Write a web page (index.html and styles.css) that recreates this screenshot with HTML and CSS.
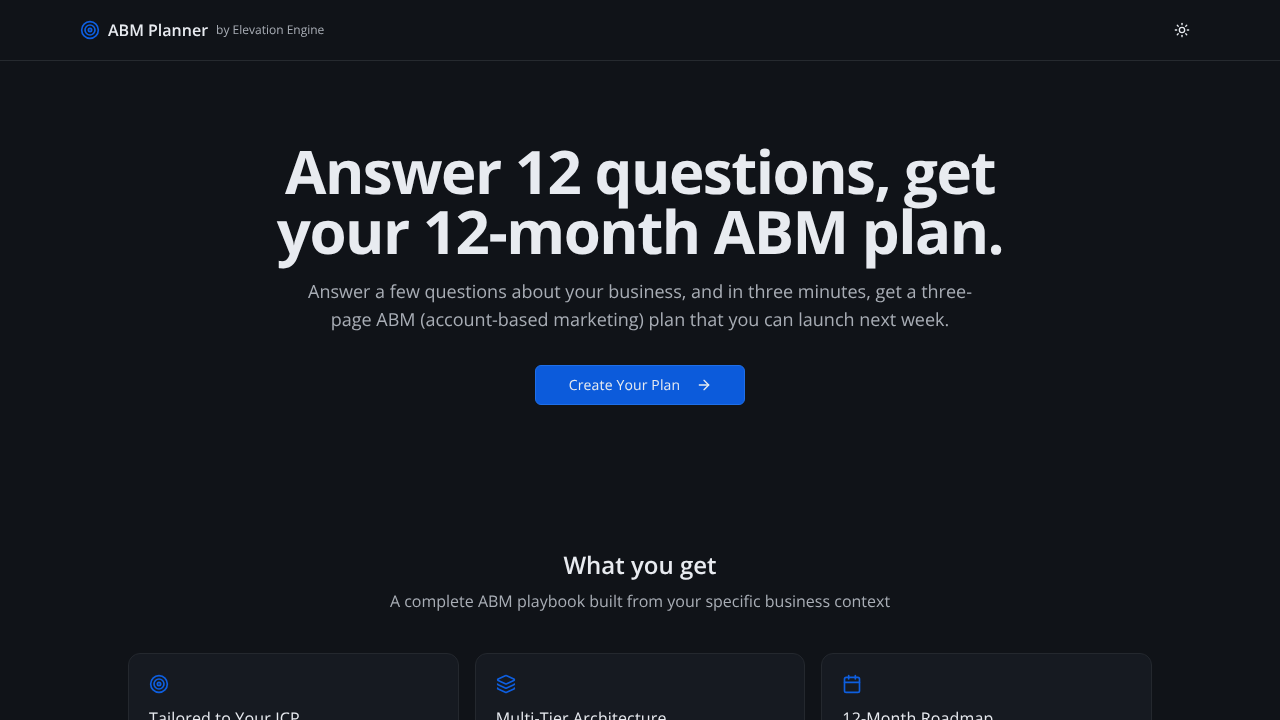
FILE: index.html
```html
<!DOCTYPE html>
<html lang="en">
<head>
<meta charset="utf-8">
<title>ABM Planner</title>
<link rel="stylesheet" href="styles.css">
</head>
<body>
<header class="topbar">
  <div class="topbar-inner">
    <div class="brand">
      <svg class="icon icon-blue" viewBox="0 0 24 24"><circle cx="12" cy="12" r="10"/><circle cx="12" cy="12" r="6"/><circle cx="12" cy="12" r="2"/></svg>
      <span class="brand-name">ABM Planner</span>
      <span class="brand-by">by Elevation Engine</span>
    </div>
    <button class="theme-btn" aria-label="Toggle theme">
      <svg class="icon-sm" viewBox="0 0 24 24"><circle cx="12" cy="12" r="4"/><path d="M12 2v2"/><path d="M12 20v2"/><path d="m4.93 4.93 1.41 1.41"/><path d="m17.66 17.66 1.41 1.41"/><path d="M2 12h2"/><path d="M20 12h2"/><path d="m6.34 17.66-1.41 1.41"/><path d="m19.07 4.93-1.41 1.41"/></svg>
    </button>
  </div>
</header>
<main>
  <section class="hero">
    <h1>Answer 12 questions, get your 12-month ABM plan.</h1>
    <p class="lead">Answer a few questions about your business, and in three minutes, get a three-page ABM (account-based marketing) plan that you can launch next week.</p>
    <button class="cta">Create Your Plan
      <svg class="icon-sm" viewBox="0 0 24 24"><path d="M5 12h14"/><path d="m12 5 7 7-7 7"/></svg>
    </button>
  </section>
  <section class="features">
    <h2>What you get</h2>
    <p class="sub">A complete ABM playbook built from your specific business context</p>
    <div class="grid">
      <article class="card">
        <svg class="icon icon-blue" viewBox="0 0 24 24"><circle cx="12" cy="12" r="10"/><circle cx="12" cy="12" r="6"/><circle cx="12" cy="12" r="2"/></svg>
        <h3>Tailored to Your ICP</h3>
      </article>
      <article class="card">
        <svg class="icon icon-blue" viewBox="0 0 24 24"><path d="M12.83 2.18a2 2 0 0 0-1.66 0L2.6 6.08a1 1 0 0 0 0 1.83l8.58 3.91a2 2 0 0 0 1.66 0l8.58-3.9a1 1 0 0 0 0-1.83z"/><path d="M2 12a1 1 0 0 0 .58.91l8.6 3.91a2 2 0 0 0 1.65 0l8.58-3.9A1 1 0 0 0 22 12"/><path d="M2 17a1 1 0 0 0 .58.91l8.6 3.91a2 2 0 0 0 1.65 0l8.58-3.9A1 1 0 0 0 22 17"/></svg>
        <h3>Multi-Tier Architecture</h3>
      </article>
      <article class="card">
        <svg class="icon icon-blue" viewBox="0 0 24 24"><path d="M8 2v4"/><path d="M16 2v4"/><rect width="18" height="18" x="3" y="4" rx="2"/><path d="M3 10h18"/></svg>
        <h3>12-Month Roadmap</h3>
      </article>
    </div>
  </section>
</main>
</body>
</html>
```
FILE: styles.css
```css
* { box-sizing: border-box; }
html, body { margin: 0; padding: 0; height: 720px; overflow: hidden; }
body {
  background: #101318;
  color: #e8ebf0;
  font-family: "Open Sans", "Liberation Sans", sans-serif;
  text-rendering: geometricPrecision;
}
.topbar { height: 61px; border-bottom: 1px solid #262a2f; will-change: transform; }
.topbar-inner {
  height: 60px;
  padding: 0 80px;
  display: flex;
  align-items: center;
  justify-content: space-between;
}
.brand { display: flex; align-items: center; }
.icon, .icon-sm {
  fill: none;
  stroke: currentColor;
  stroke-width: 2;
  stroke-linecap: round;
  stroke-linejoin: round;
  flex: none;
  display: block;
}
.icon { width: 20px; height: 20px; }
.icon-sm { width: 16px; height: 16px; }
.icon-blue { color: #0e5fe0; }
.brand-name { margin-left: 8px; font-size: 16px; font-weight: 600; color: #e8ebf0; }
.brand-by { margin-left: 8px; font-size: 12px; line-height: 16px; color: #a8adb5; }
.theme-btn {
  width: 36px;
  height: 36px;
  padding: 0;
  border: 0;
  background: transparent;
  color: #e8ebf0;
  display: flex;
  align-items: center;
  justify-content: center;
}
.hero {
  padding-top: 80px;
  display: flex;
  flex-direction: column;
  align-items: center;
  text-align: center;
  will-change: transform;
}
h1 {
  margin: 0;
  width: 768px;
  font-size: 60px;
  line-height: 60px;
  font-weight: 700;
  letter-spacing: -1.5px;
  color: #e8ebf0;
}
.lead {
  margin: 17px 0 0;
  width: 672px;
  font-size: 18px;
  line-height: 28px;
  color: #a8adb5;
}
.cta {
  margin-top: 31px;
  width: 210px;
  height: 40px;
  padding: 0 0 0 1px;
  border: 1px solid #1f6fe8;
  border-radius: 6px;
  background: #0c5bdb;
  color: #e8ebf0;
  font: 500 14px "Open Sans", "Liberation Sans", sans-serif;
  letter-spacing: 0.01em;
  text-rendering: geometricPrecision;
  display: flex;
  align-items: center;
  justify-content: center;
  gap: 16px;
}
.features { margin-top: 145px; text-align: center; will-change: transform; }
h2 { margin: 0; font-size: 24px; line-height: 32px; font-weight: 600; color: #e8ebf0; }
.sub { margin: 7px 0 0; font-size: 16px; line-height: 24px; color: #a8adb5; }
.grid {
  width: 1024px;
  margin: 40px auto 0;
  display: grid;
  grid-template-columns: repeat(3, 1fr);
  gap: 16px;
  text-align: left;
}
.card {
  height: 200px;
  padding: 20px;
  background: #161a21;
  border: 1px solid #24282e;
  border-radius: 12px;
}
h3 { margin: 12px 0 0; font-size: 16px; line-height: 24px; font-weight: 500; letter-spacing: 0.01em; color: #e8ebf0; }
```
